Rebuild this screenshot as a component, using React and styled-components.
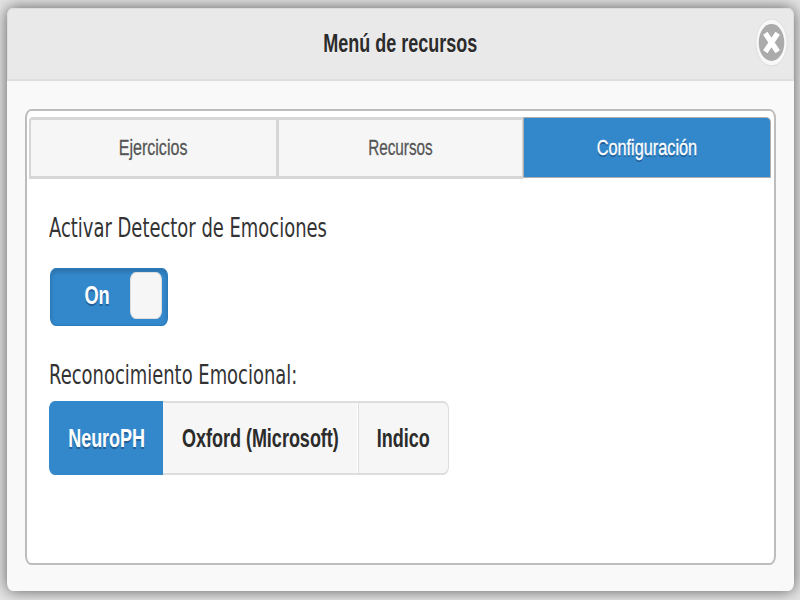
import React from "react";
import styled, { createGlobalStyle } from "styled-components";

const GlobalStyle = createGlobalStyle`
  * { box-sizing: border-box; }
  body { margin: 0; background: #dcdcdc; overflow: hidden; }
`;

const Screen = styled.main`
  width: 800px;
  height: 600px;
  padding: 8px 6px 9px 7px;
  background: #e4e4e4;
  overflow: hidden;
  font-family: "Liberation Sans", Arial, sans-serif;
  color: #2b2b2b;
`;

const Dialog = styled.section`
  height: 583px;
  border-radius: 6px / 8px;
  background: #f9f9f9;
  box-shadow: 0 0 15px rgba(0, 0, 0, 0.6);
`;

const Header = styled.header`
  position: relative;
  display: flex;
  align-items: center;
  justify-content: center;
  height: 73px;
  border: 1px solid #dddddd;
  border-bottom: 2px solid #dedede;
  border-radius: 6px 6px 0 0 / 8px 8px 0 0;
  background: #e9e9e9;
`;

const Narrow = styled.span`
  display: inline-block;
  white-space: nowrap;
  line-height: 30px;
  transform: scaleX(${(p) => p.$scale});
  transform-origin: ${(p) => p.$origin || "center"};
`;

const Title = styled.h1`
  margin: 0 0 1px -1px;
  font-size: 26px;
  font-weight: bold;
  text-shadow: 0 1px 0 #f3f3f3;
`;

const CloseButton = styled.button`
  position: absolute;
  top: 9px;
  right: 5px;
  width: 33px;
  height: 49px;
  padding: 0;
  border: 0;
  background: none;

  svg { display: block; }
`;

const Panel = styled.div`
  height: 456px;
  margin: 28px 18px 0;
  padding: 6px 3px 0 2px;
  border: 2px solid #bdbdbd;
  border-radius: 6px / 9px;
  background: #ffffff;
`;

const Tabs = styled.nav`
  display: grid;
  grid-template-columns: 248px 246px 1fr;
  height: 62px;
`;

const Tab = styled.button`
  display: flex;
  align-items: center;
  justify-content: center;
  padding: 0;
  border: 3px solid ${(p) => (p.$active ? "#3388cc" : "#d6d6d6")};
  border-left-width: 2px;
  border-right-width: ${(p) => (p.$last ? "2px" : "1px")};
  border-radius: ${(p) => (p.$first ? "4px 0 0 0" : p.$last ? "0 4px 0 0" : "0")};
  background: ${(p) => (p.$active ? "#3388cc" : "#f6f6f6")};
  box-shadow: ${(p) => (p.$active ? "0 0 0 1px #b0b0b0" : "none")};
  margin: ${(p) => (p.$active ? "1px 1px 2px 1px" : "0")};
  color: ${(p) => (p.$active ? "#ffffff" : "#555555")};
  font: 22px "Liberation Sans", Arial, sans-serif;
  -webkit-text-stroke: 0.3px currentColor;
  text-shadow: ${(p) => (p.$active ? "0 2px 0 #225f96" : "0 1px 0 #ffffff")};
`;

const Settings = styled.div`
  display: flex;
  flex-direction: column;
  align-items: flex-start;
  padding: 34px 0 0 20px;
`;

const Label = styled.div`
  height: 30px;
  font: 26px "DejaVu Sans", Verdana, sans-serif;
  color: #333333;
`;

const Switch = styled.div`
  display: flex;
  align-items: flex-start;
  justify-content: flex-end;
  width: 118px;
  height: 58px;
  margin: 25px 0 34px 1px;
  padding: 3px 5px 0 0;
  border: 1px solid #2b7bbb;
  border-radius: 6px / 8px;
  background: #3388cc;
  box-shadow: inset 0 3px 4px rgba(0, 0, 0, 0.16);
`;

const SwitchText = styled.div`
  width: 66px;
  padding-top: 8px;
  text-align: center;
  color: #ffffff;
  font-size: 26px;
  font-weight: bold;
  text-shadow: 0 2px 0 #225f96;
`;

const Knob = styled.div`
  width: 32px;
  height: 47px;
  border: 1px solid #dddddd;
  border-radius: 6px / 8px;
  background: #f6f6f6;
`;

const Segments = styled.div`
  display: grid;
  grid-template-columns: 114px 195px 91px;
  height: 74px;
  margin-top: 11px;
`;

const Segment = styled.button`
  display: flex;
  align-items: center;
  justify-content: center;
  padding: 0;
  border: 1px solid ${(p) => (p.$active ? "#3388cc" : "#dddddd")};
  border-width: 2px ${(p) => (p.$last ? "1px" : "0")} 2px ${(p) => (p.$middle ? "0" : "1px")};
  border-radius: ${(p) => (p.$active ? "6px 0 0 6px / 8px 0 0 8px" : p.$last ? "0 6px 6px 0 / 0 8px 8px 0" : "0")};
  background: ${(p) => (p.$active ? "#3388cc" : "#f6f6f6")};
  box-shadow: ${(p) => (p.$middle ? "inset -1px 0 0 #ffffff" : "none")};
  color: ${(p) => (p.$active ? "#ffffff" : "#2b2b2b")};
  font: bold 26px "Liberation Sans", Arial, sans-serif;
  text-shadow: ${(p) => (p.$active ? "0 2px 0 #225f96" : "0 1px 0 #f3f3f3")};
`;

export default function App() {
  return (
    <Screen>
      <GlobalStyle />
      <Dialog>
        <Header>
          <Title><Narrow $scale={0.692}>Menú de recursos</Narrow></Title>
          <CloseButton aria-label="Cerrar">
            <svg width="33" height="49" viewBox="0 0 33 49">
              <ellipse cx="16.5" cy="24.5" rx="15.7" ry="23.3" fill="#f8f8f8" stroke="#dedede" />
              <ellipse cx="16.5" cy="24.5" rx="12.8" ry="18.5" fill="#ababab" />
              <path d="M10.3 15.2L22.7 33.8M22.7 15.2L10.3 33.8" stroke="#ffffff" strokeWidth="5.3" />
            </svg>
          </CloseButton>
        </Header>
        <Panel>
          <Tabs>
            <Tab $first><Narrow $scale={0.73}>Ejercicios</Narrow></Tab>
            <Tab><Narrow $scale={0.695}>Recursos</Narrow></Tab>
            <Tab $active $last><Narrow $scale={0.74}>Configuración</Narrow></Tab>
          </Tabs>
          <Settings>
            <Label><Narrow $scale={0.69} $origin="left">Activar Detector de Emociones</Narrow></Label>
            <Switch>
              <SwitchText><Narrow $scale={0.7}>On</Narrow></SwitchText>
              <Knob />
            </Switch>
            <Label><Narrow $scale={0.69} $origin="left">Reconocimiento Emocional:</Narrow></Label>
            <Segments>
              <Segment $active><Narrow $scale={0.692}>NeuroPH</Narrow></Segment>
              <Segment $middle><Narrow $scale={0.692}>Oxford (Microsoft)</Narrow></Segment>
              <Segment $last><Narrow $scale={0.692}>Indico</Narrow></Segment>
            </Segments>
          </Settings>
        </Panel>
      </Dialog>
    </Screen>
  );
}
